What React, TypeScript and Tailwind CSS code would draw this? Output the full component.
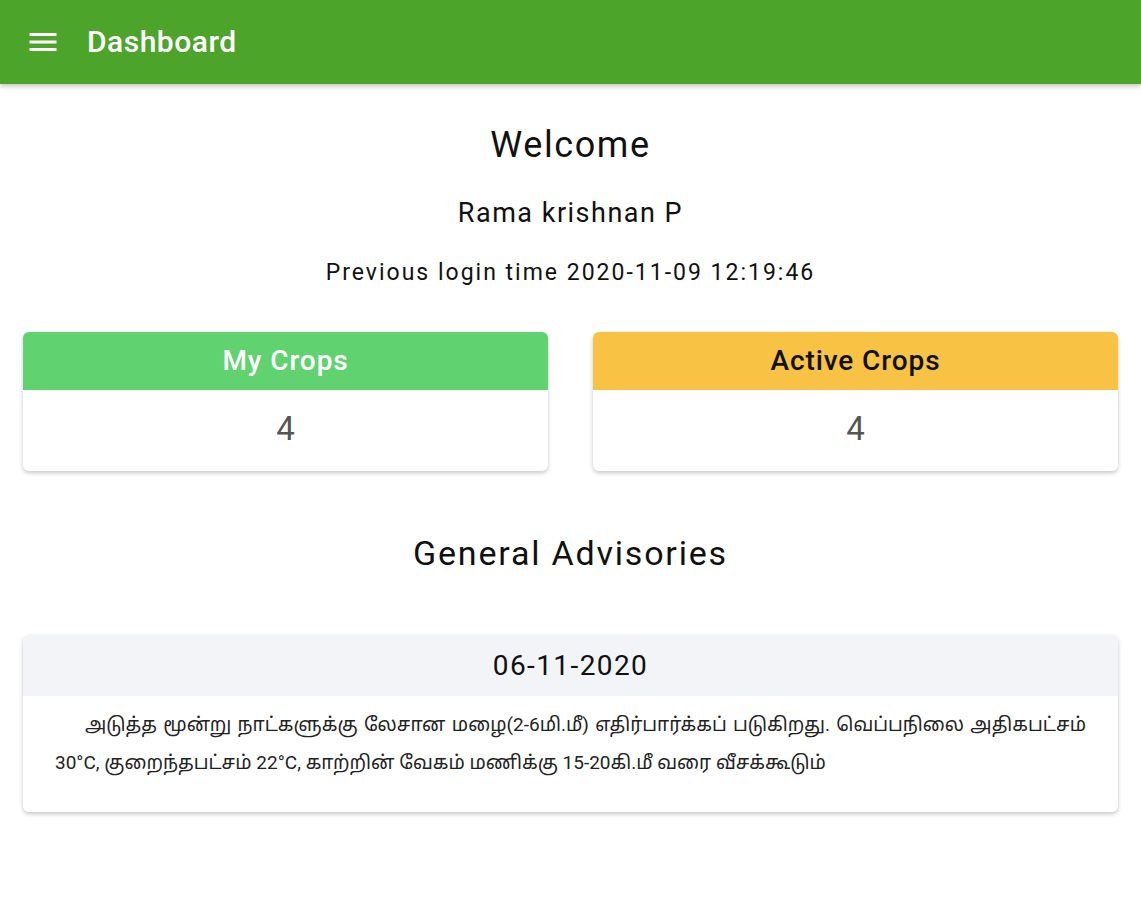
import React from 'react';

const font = { fontFamily: 'Roboto, "Noto Sans", "Noto Sans Tamil", sans-serif' };

const StatCard: React.FC<{ title: string; value: number; head: string; text: string }> = ({ title, value, head, text }) => (
  <div className="flex-1 rounded-md bg-white overflow-hidden shadow-[0_2px_4px_rgba(0,0,0,0.22)]">
    <div className={`h-[58px] flex items-center justify-center text-[28px] leading-[28px] font-medium tracking-[0.9px] ${head} ${text}`}>
      {title}
    </div>
    <div className="h-[81px] flex items-center justify-center text-[33px] text-[#555] pb-[3px]">{value}</div>
  </div>
);

export default function App() {
  return (
    <div className="min-h-[900px] bg-white text-[#111]" style={font}>
      <header className="h-[84px] bg-[#4ca52a] flex items-center shadow-[0_2px_5px_rgba(0,0,0,0.25)]">
        <svg className="ml-[25px]" width="36" height="36" viewBox="0 0 24 24" fill="white">
          <path d="M3 18h18v-2H3v2zm0-5h18v-2H3v2zm0-7v2h18V6H3z" />
        </svg>
        <h1 className="ml-[26px] text-[30px] leading-[30px] font-medium tracking-[0.5px] text-white">Dashboard</h1>
      </header>

      <main className="px-[23px]">
        <div className="flex flex-col items-center">
          <h2 className="mt-[43px] text-[36px] leading-[36px] tracking-[1.6px]">Welcome</h2>
          <p className="mt-[37px] text-[27px] leading-[27px] tracking-[1.5px]">Rama krishnan P</p>
          <p className="mt-[34px] text-[23px] leading-[23px] tracking-[2px]">Previous login time 2020-11-09 12:19:46</p>
        </div>

        <div className="mt-[48px] flex gap-[45px]">
          <StatCard title="My Crops" value={4} head="bg-[#60d270]" text="text-white" />
          <StatCard title="Active Crops" value={4} head="bg-[#f8c345]" text="text-[#111]" />
        </div>

        <h2 className="mt-[65px] text-center text-[34px] leading-[34px] tracking-[1.8px]">General Advisories</h2>

        <div className="mt-[65px] rounded-md bg-white overflow-hidden shadow-[0_2px_4px_rgba(0,0,0,0.22)]">
          <div className="h-[61px] bg-[#f3f4f8] flex items-center justify-center text-[28px] leading-[28px] tracking-[1.4px]">
            06-11-2020
          </div>
          <p className="px-[32px] pt-[10px] pb-[30px] text-[19px] leading-[38px] text-justify indent-[30px] text-[#222]">
            அடுத்த மூன்று நாட்களுக்கு லேசான மழை(2-6மி.மீ) எதிர்பார்க்கப் படுகிறது. வெப்பநிலை அதிகபட்சம் 30°C, குறைந்தபட்சம் 22°C, காற்றின் வேகம் மணிக்கு 15-20கி.மீ வரை வீசக்கூடும்
          </p>
        </div>
      </main>
    </div>
  );
}
